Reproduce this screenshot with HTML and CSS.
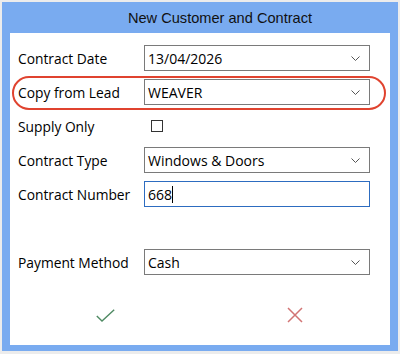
FILE: index.html
```html
<!DOCTYPE html>
<html lang="en">
<head>
  <meta charset="UTF-8">
  <meta name="viewport" content="width=device-width, initial-scale=1.0">
  <title>New Customer and Contract</title>
  <link rel="stylesheet" href="styles.css">
</head>
<body>
  <div class="window">
    <div class="title">New Customer and Contract</div>

    <div class="panel">
      <div class="form">
        <label class="label">Contract Date</label>
        <div class="select">
          <span>13/04/2026</span>
          <svg class="chevron" width="9" height="5" viewBox="0 0 9 5"><polyline points="0.5,0.5 4.5,4.5 8.5,0.5" fill="none" stroke="#555" stroke-width="1"/></svg>
        </div>

        <label class="label">Copy from Lead</label>
        <div class="select">
          <span>WEAVER</span>
          <svg class="chevron" width="9" height="5" viewBox="0 0 9 5"><polyline points="0.5,0.5 4.5,4.5 8.5,0.5" fill="none" stroke="#555" stroke-width="1"/></svg>
        </div>

        <label class="label">Supply Only</label>
        <div class="check-cell"><span class="checkbox"></span></div>

        <label class="label">Contract Type</label>
        <div class="select">
          <span>Windows &amp; Doors</span>
          <svg class="chevron" width="9" height="5" viewBox="0 0 9 5"><polyline points="0.5,0.5 4.5,4.5 8.5,0.5" fill="none" stroke="#555" stroke-width="1"/></svg>
        </div>

        <label class="label">Contract Number</label>
        <div class="textbox focused"><span>668</span><span class="caret"></span></div>

        <div class="spacer"></div>
        <div class="spacer"></div>

        <label class="label">Payment Method</label>
        <div class="select">
          <span>Cash</span>
          <svg class="chevron" width="9" height="5" viewBox="0 0 9 5"><polyline points="0.5,0.5 4.5,4.5 8.5,0.5" fill="none" stroke="#555" stroke-width="1"/></svg>
        </div>
      </div>

      <!-- annotation round the lead row -->
      <div class="highlight"></div>

      <div class="actions">
        <button class="action">
          <svg width="19" height="13" viewBox="0 0 19 13"><polyline points="0.8,7 6,12 18.2,0.8" fill="none" stroke="#4f8a63" stroke-width="1.4"/></svg>
        </button>
        <button class="action">
          <svg width="16" height="16" viewBox="0 0 16 16"><path d="M1 1 L15 15 M15 1 L1 15" fill="none" stroke="#d27474" stroke-width="1.5"/></svg>
        </button>
      </div>
    </div>
  </div>
</body>
</html>
```

FILE: styles.css
```css
body {
  margin: 0;
  background-color: #ececec;
  font-family: 'Open Sans', 'Noto Sans', sans-serif;
  color: #000;
}
.window {
  box-sizing: border-box;
  margin: 2px;
  width: 396px;
  height: 349px;
  background-color: #79abf0;
  padding: 0 8px 6px;
  display: flex;
  flex-direction: column;
}
.title {
  height: 31px;
  display: flex;
  align-items: center;
  justify-content: center;
  padding-left: 40px;
  font-family: 'Liberation Sans', Arial, sans-serif;
  font-size: 14.6px;
  color: #111;
}
.panel {
  position: relative;
  flex: 1;
  background-color: white;
  display: flex;
  flex-direction: column;
}
.form {
  display: grid;
  grid-template-columns: 126px 226px;
  grid-auto-rows: 26px;
  row-gap: 8px;
  padding: 12px 0 0 8px;
  font-size: 13.8px;
}
.label {
  display: flex;
  align-items: center;
}
.select, .textbox {
  box-sizing: border-box;
  border: 1px solid #7a7a7a;
  display: flex;
  align-items: center;
  padding: 0 9px 0 3px;
  font-size: 14px;
}
.select span {
  flex: 1;
}
.chevron {
  display: block;
}
.textbox.focused {
  border-color: #2d6cc0;
}
.caret {
  width: 1px;
  height: 17px;
  background: #000;
}
.check-cell {
  display: flex;
  align-items: center;
  padding-left: 7px;
}
.checkbox {
  box-sizing: border-box;
  width: 12px;
  height: 12px;
  border: 1px solid #333;
}
.spacer {
  height: 25px;
}
.highlight {
  position: absolute;
  left: 2px;
  top: 43px;
  width: 374px;
  height: 34px;
  box-sizing: border-box;
  border: 2px solid #e0432f;
  border-radius: 17px;
}
.actions {
  margin-top: auto;
  display: flex;
  height: 56px;
  padding-bottom: 2px;
}
.action {
  flex: 1;
  background: none;
  border: none;
  padding: 0;
  display: flex;
  align-items: center;
  justify-content: center;
}
.action svg {
  display: block;
}
```
